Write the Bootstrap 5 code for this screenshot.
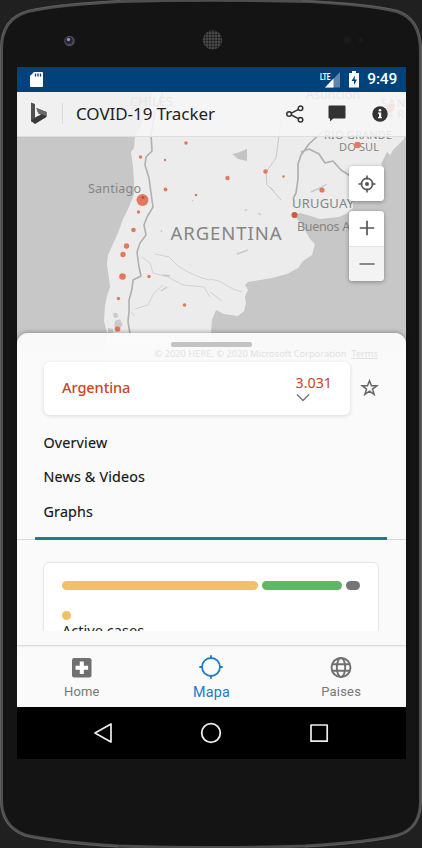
<!DOCTYPE html>
<html lang="es">
<head>
<meta charset="utf-8">
<meta name="viewport" content="width=device-width, initial-scale=1">
<title>COVID-19 Tracker</title>
<link rel="stylesheet" href="https://cdn.jsdelivr.net/npm/bootstrap@5.3.0/dist/css/bootstrap.min.css">
<style>
body{background:#202020;font-family:"Noto Sans","Open Sans",sans-serif;color:#1c1c1c}
svg{display:block}
.phone{width:422px;height:848px;padding:67px 16px 0 17px}
.shell{left:0;top:0}
.screen{width:389px;height:692px;background:#f9f9fa}
.status{height:25px;background:#00437b;padding:0 9px 0 13px}
.clock{font:500 15.5px/25px Roboto,sans-serif;color:#fff;letter-spacing:-.2px}
.stage{height:553px}
.geo{left:0;top:0}
.geo text{font-family:"Noto Sans",sans-serif;fill:#858585}
.topbar{height:44.5px;background:rgba(247,247,248,.85);padding:0 18px 0 13px;border-bottom:1px solid #dedede}
.topbar h1{font-size:17px;line-height:24px;color:#222;white-space:nowrap;letter-spacing:-.06px}
.share-icon{margin-right:24px}
.chat-icon{margin-right:26px}
.rule-v{width:1px;height:21px;background:#dcdcdc;margin:0 13px 0 15px}
.mapview{height:196px;padding:29.5px 22px 0 0}
.ctl{width:35px;background:#fff;border-radius:4px;box-shadow:0 1px 4px rgba(0,0,0,.35);overflow:hidden}
.ctl button{width:35px;height:35px;display:flex;align-items:center;justify-content:center;padding:0;border:0;background:#fff}
.ctl button+button{background:#f3f3f3;border-top:1px solid #e3e3e3}
.zoomer{margin-top:1.5px}
.sheet{height:312.5px;background:linear-gradient(rgba(251,251,251,.94),#fafafa 30px);border-radius:11px 11px 0 0;box-shadow:0 -1px 4px rgba(0,0,0,.28)}
.grip{width:81px;height:5px;border-radius:2px;background:#c3c3c3;margin:9px auto 0}
.credit{height:15px;padding-right:28px;font-size:9.3px;line-height:14px;color:#e2e2e2;white-space:nowrap}
.place{width:306px;height:53px;margin-left:27px;padding:0 18px;background:#fff;border-radius:6px;box-shadow:0 1px 4px rgba(0,0,0,.13)}
.place-name{font-size:14.6px;font-weight:500;color:#cb4525;letter-spacing:-.1px}
.count{font-size:14.3px;line-height:17px;color:#cb4525}
.place svg{margin:2px 0 0 1px}
.sections{margin:11px 0 0 26.5px;flex-grow:1}
.sections a{display:block;font-size:14.3px;line-height:34.6px;color:#161616;text-decoration:none;letter-spacing:.18px;-webkit-text-stroke:.15px #161616}
.divide{height:3px;border-bottom:1px solid #d9d9d9}
.divide div{height:3px;width:352px;margin-left:18px;background:#1a7f8d}
.clip{height:91px;margin-bottom:14.5px;overflow:hidden;padding:22px 27px 0 26px}
.stats{height:120px;background:#fff;border:1px solid #e5e5e5;border-radius:6px;padding:18px 17px 0 18px}
.stats .dot{margin-top:21px}
.legend-name{font-size:14.6px;line-height:18px;margin-top:1px;white-space:nowrap}
.seg{height:9px;border-radius:5px}
.amber{background:#f0c264}.green{background:#5fb866}.gray{background:#757575}
.dot{width:9px;height:9px;border-radius:50%}
.tabs{height:62px;background:#fafafb;border-top:1px solid #e9eaec;font-family:Roboto,sans-serif;font-size:13px;line-height:16px;color:#777}
.tabs .on{color:#217bcb;font-size:14.3px}
.tab-cell{width:33.333%;display:flex;flex-direction:column;align-items:center;justify-content:flex-end;padding-bottom:7px}
.tab-cell svg{margin-bottom:6px}
.tab-cell.on svg{margin-bottom:5px}
.tab-cell span{letter-spacing:.2px}
.keys{height:52px;background:#000;padding:0 76px 0 75px}
</style>
<script src="https://cdn.jsdelivr.net/npm/bootstrap@5.3.0/dist/js/bootstrap.bundle.min.js"></script>
</head>
<body class="m-0 overflow-hidden">
<div class="phone position-relative">
<svg class="shell position-absolute" width="422" height="848" viewBox="0 0 422 848">
  <defs>
    <pattern id="mesh" width="3" height="3" patternUnits="userSpaceOnUse"><rect width="3" height="3" fill="#484848"/><circle cx="1.5" cy="1.5" r="1" fill="#161616"/></pattern>
  </defs>
  <path d="M1.5 800V50Q1 19 28 11.500Q55 5 120 1.500Q211-1 310 1.500Q372 5 397 11.500Q420 19 420.500 50V800Q421 828 398 835Q372 842 305 846Q211 849 118 846Q55 842 25 835Q1.500 826 1.500 800Z" fill="#141414" stroke="#4e4e4e" stroke-width="3"/>
  <path d="M.6 800V50Q0 18 28 10.500Q55 4 120 .6M302 .6Q372 4 398 10.500Q421 18 421.500 50V800Q421 828 398 836Q372 843 305 847M118 847Q55 843 25 836Q.6 827 .6 800" fill="none" stroke="#666" stroke-width=".7"/>
  <circle cx="69.500" cy="41" r="5.300" fill="#4a4a53"/><circle cx="69" cy="40.500" r="3.600" fill="#22223c"/><circle cx="68.500" cy="39.500" r="1.700" fill="#9090bd"/>
  <circle cx="212.500" cy="40" r="9.700" fill="url(#mesh)"/>
  <circle cx="347" cy="40" r="3.500" fill="#1c1a1a"/><circle cx="361" cy="40" r="2.500" fill="#1c1a1a"/>
</svg>
<main class="screen position-relative d-flex flex-column">
  <div class="status d-flex align-items-center flex-shrink-0">
    <svg width="13" height="16" viewBox="0 0 13 16"><path d="M4 0h8q1 0 1 1v13q0 1-1 1H1q-1 0-1-1V4z" fill="#fff"/><path d="M5.500 1.500v3M8 1.500v3M10.500 1.500v3" stroke="#00437b" stroke-width="1.300"/></svg>
    <svg class="ms-auto" width="21" height="16" viewBox="0 0 21 16"><path d="M20 0v15.500H5z" fill="#5d86aa"/><path d="M13.500 6.500v9H5z" fill="#fff"/><text x="0" y="7.500" font-family="Roboto" font-size="9" font-weight="700" fill="#fff" stroke="#00437b" stroke-width="1.500" paint-order="stroke" textLength="10.500" lengthAdjust="spacingAndGlyphs">LTE</text></svg>
    <svg class="ms-2 me-2" width="10" height="17" viewBox="0 0 10 17"><path d="M3 0h4v2h3v14.500H0V2h3z" fill="#fff"/><path d="M6 4.500 2.500 10H5v4l3-5.500H5.600z" fill="#00437b"/></svg>
    <span class="clock">9:49</span>
  </div>
  <div class="stage position-relative flex-shrink-0">
    <svg class="geo position-absolute" width="389" height="290" viewBox="17 92 389 290">
      <rect x="17" y="92" width="389" height="290" fill="#c7c7c7"/>
      <path d="M153 92 140 128 135 137 134 148 131 152 133 166 134 182 134 194 129 207 123 219 118 233 112 246 108 255 107 264 109 279 110 287 107 296 105 306 104 321 107 333 102 370 210 370 211 333 212 320 216 310 224 314 238 316 244 311 246 303 245 296 248 290 245 285 248 282 272 278 287 274 298 268 303 261 312 255 315 244 310 239 306 232 301 224 294 215 300 213 311 216 320 219 329 218 339 217 346 214 353 208 352 190 368 173 386 163 393 150 404 139 406 134V92Z" fill="#ececec"/>
      <path d="M232 154 237 153 247 149 247 161 238 159ZM381 164 387 152 390 155 385 166Z" fill="#c4c4c4"/>
      <path d="M114 313q3-1 4 2t-3 3q-3-2-1-5ZM115 321l5-2 3 6-4 4-5-2ZM108 328l5 1v4h-5Z" fill="#cbcbcb"/>
      <g fill="none" stroke="#b0b0b0" stroke-linejoin="round">
        <path d="M163 92 155 112 151 134 152 151 146 157 145 165 149 178 151 193 153 207 147 217 144 225 146 235 140 243 137 252 139 267 141 276 133 280 132 289 129 300 129 311 128 322 130 334" stroke-width="1.600"/>
        <path d="M322 132 309 144 301 155 298 164 298 179 296 193 293 199M301 152 309 149 319 154 325 163 333 161 341 170 352 177" stroke-width="1.700"/>
        <path d="M322 132 336 120 345 106M303 92 290 110 281 122 279 136 276 158 266 172 267 185 274 191M270 187 281 200" stroke="#c9c9c9"/>
        <path d="M155 254 169 257 178 266 190 273 202 278 210 280M142 257 150 263 153 273 168 277 183 285 204 287 210 297M163 285 154 293 148 305 135 309M135 316 131 312M210 279 219 281 233 289 242 292M210 292 222 301" stroke="#d2d2d2"/>
        <path d="M161 291 167 287M163 275 170 276M311 192 320 188 327 184M237 254 248 250M245 211 247 209M258 213 261 215M162 230 161 232M192 200 193 201" stroke="#c8c8c8" stroke-width="1.400"/>
      </g>
      <g>
        <text x="130" y="106" font-size="13" textLength="43">CHILES</text>
        <text x="306" y="98.500" font-size="12.500" textLength="54">Asunción</text>
        <text x="381" y="107" font-size="11" textLength="24">SAN</text>
        <text x="386" y="118" font-size="11" textLength="18">AR</text>
        <text x="324" y="139" font-size="11" textLength="68">RIO GRANDE</text>
        <text x="339" y="150.500" font-size="11" textLength="40">DO SUL</text>
        <text x="88" y="192.500" font-size="12.500" textLength="53">Santiago</text>
        <text x="170.500" y="240" font-size="18.500" textLength="111">ARGENTINA</text>
        <text x="292" y="207.500" font-size="13" textLength="62">URUGUAY</text>
        <text x="297" y="230.500" font-size="12.500" textLength="73">Buenos Aires</text>
      </g>
      <g fill="#e2795c">
        <circle cx="142.500" cy="200" r="6"/><circle cx="143" cy="197.500" r="1.500" fill="#c84c35"/>
        <circle cx="140.500" cy="157" r="1.700"/><circle cx="186" cy="143" r="1.800"/><circle cx="165" cy="160" r="1.200"/><circle cx="165.500" cy="189.500" r="1.900"/><circle cx="196" cy="195" r="1.300"/><circle cx="138.500" cy="212" r="1.700"/><circle cx="133.500" cy="230" r="2.300"/><circle cx="126.500" cy="246" r="2.700"/><circle cx="123" cy="254.500" r="2.700"/><circle cx="122.500" cy="276.500" r="3.300"/><circle cx="149" cy="276.500" r="1.700"/><circle cx="118.500" cy="298.500" r="1.700"/><circle cx="184.500" cy="305" r="1.800"/><circle cx="117.500" cy="329" r="2.800"/>
        <circle cx="227.500" cy="178" r="2.200"/><circle cx="265.500" cy="171.500" r="2.200"/><circle cx="283.500" cy="176.500" r="1.200"/><circle cx="322" cy="190" r="2.600"/><circle cx="294.500" cy="215" r="3" fill="#cf583d"/><circle cx="357.500" cy="145" r="3.200"/><circle cx="390" cy="108" r="4"/>
      </g>
    </svg>
    <header class="topbar position-relative d-flex align-items-center">
      <svg width="17" height="23" viewBox="0 0 17 23"><path d="M1 .5 5 2v14l-4 4z" fill="#505050"/><path d="M1 19 5 15.500 11 12.500 8.300 11.200 6.400 6 16.500 10V15L5 22Z" fill="#393939"/><path d="M6.400 6 16.500 10V14L11 12 8.300 11.200Z" fill="#6a6a6a"/></svg>
      <div class="rule-v"></div>
      <h1 class="m-0 fw-normal">COVID-19 Tracker</h1>
      <svg class="share-icon ms-auto" width="18" height="18" viewBox="0 0 18 18" fill="none" stroke="#333" stroke-width="1.500"><path d="m5.400 8.200 7-3.800M5.400 10l7 3.700"/><circle cx="3.100" cy="9" r="2.300"/><circle cx="14.500" cy="3.300" r="2.300"/><circle cx="14.500" cy="14.700" r="2.300"/></svg>
      <svg class="chat-icon" width="18" height="17" viewBox="0 0 18 17"><path d="M1.500.5h15q1 0 1 1v11q0 1-1 1H5.200L2 16.500v-3H1.500q-1 0-1-1v-11q0-1 1-1z" fill="#333"/></svg>
      <svg width="16" height="16" viewBox="0 0 16 16"><circle cx="8" cy="8" r="7.700" fill="#333"/><path d="M6 6.500h3.200V11H10v1.300H6V11h1V7.800H6z" fill="#fff"/><circle cx="8" cy="4.200" r="1.300" fill="#fff"/></svg>
    </header>
    <div class="mapview position-relative d-flex flex-column align-items-end">
      <div class="ctl mb-2"><button aria-label="Mi ubicación"><svg width="18" height="18" viewBox="0 0 18 18" fill="none" stroke="#555" stroke-width="1.600"><circle cx="9" cy="9" r="5.600"/><circle cx="9" cy="9" r="2" fill="#555" stroke="none"/><path d="M9 .5v4M9 13.500v4M.5 9h4M13.500 9h4"/></svg></button></div>
      <div class="ctl zoomer"><button aria-label="Acercar"><svg width="16" height="16" viewBox="0 0 16 16" stroke="#555" stroke-width="1.700"><path d="M8 .8v14.400M.8 8h14.400"/></svg></button><button aria-label="Alejar"><svg width="16" height="16" viewBox="0 0 16 16" stroke="#666" stroke-width="1.700"><path d="M.5 8h15"/></svg></button></div>
    </div>
    <section class="sheet position-relative d-flex flex-column">
      <div class="grip flex-shrink-0"></div>
      <div class="credit text-end flex-shrink-0">© 2020 HERE, © 2020 Microsoft Corporation &nbsp;<u>Terms</u></div>
      <div class="d-flex align-items-center">
        <div class="place d-flex align-items-center justify-content-between">
          <span class="place-name">Argentina</span>
          <div><div class="count">3.031</div><svg width="15" height="9" viewBox="0 0 15 9"><path d="m1 1.500 6 6 6-6" fill="none" stroke="#777" stroke-width="1.500"/></svg></div>
        </div>
        <svg class="ms-2" width="24" height="18" viewBox="-3 0 24 18"><path d="m8.500 1.800 2 5h5.300l-4.300 3.300 1.600 5.200-4.600-3.200-4.600 3.200 1.600-5.200L1.200 6.800h5.300z" fill="none" stroke="#666" stroke-width="1.500"/></svg>
      </div>
      <nav class="sections d-flex flex-column"><a href="#">Overview</a><a href="#">News &amp; Videos</a><a href="#">Graphs</a></nav>
      <div class="divide flex-shrink-0"><div></div></div>
      <div class="clip flex-shrink-0">
        <div class="stats">
          <div class="d-flex gap-1"><div class="seg amber" style="width:196px"></div><div class="seg green" style="width:80px"></div><div class="seg gray" style="width:14px"></div></div>
          <div class="dot amber"></div>
          <div class="legend-name">Active cases</div>
        </div>
      </div>
    </section>
  </div>
  <nav class="tabs d-flex flex-shrink-0 text-center">
    <div class="tab-cell"><svg width="20" height="20" viewBox="0 0 20 20"><rect width="19.500" height="19.500" rx="2.300" fill="#707070"/><path d="M7.800 3.500h4v4.300h4.300v4h-4.300v4.300h-4v-4.300H3.500v-4h4.300z" fill="#fff"/></svg><span>Home</span></div>
    <div class="tab-cell on"><svg width="24" height="24" viewBox="0 0 24 24" fill="none" stroke="#217bcb" stroke-width="1.800"><circle cx="12" cy="12" r="9"/><path d="M12 .3V4M12 20v3.700M.3 12H4M20 12h3.700"/></svg><span>Mapa</span></div>
    <div class="tab-cell"><svg width="22" height="21" viewBox="0 .5 22 21" fill="none" stroke="#707070" stroke-width="1.900"><circle cx="11" cy="11" r="9.500"/><ellipse cx="11" cy="11" rx="4.200" ry="9.500"/><path d="M2 7.700h18M2 14.300h18"/></svg><span>Paises</span></div>
  </nav>
  <div class="keys d-flex align-items-center justify-content-between flex-shrink-0">
    <svg width="22" height="22" viewBox="0 0 22 22" fill="none" stroke="#eee" stroke-width="1.700" stroke-linejoin="round"><path d="M19 2v18L3 11z"/></svg>
    <svg width="22" height="22" viewBox="0 0 22 22" fill="none" stroke="#eee" stroke-width="1.800"><circle cx="11" cy="11" r="9.300"/></svg>
    <svg width="22" height="22" viewBox="0 0 22 22" fill="none" stroke="#eee" stroke-width="1.700" stroke-linejoin="round"><rect x="3" y="3" width="16.200" height="16.200"/></svg>
  </div>
</main>
</div>
</body>
</html>
